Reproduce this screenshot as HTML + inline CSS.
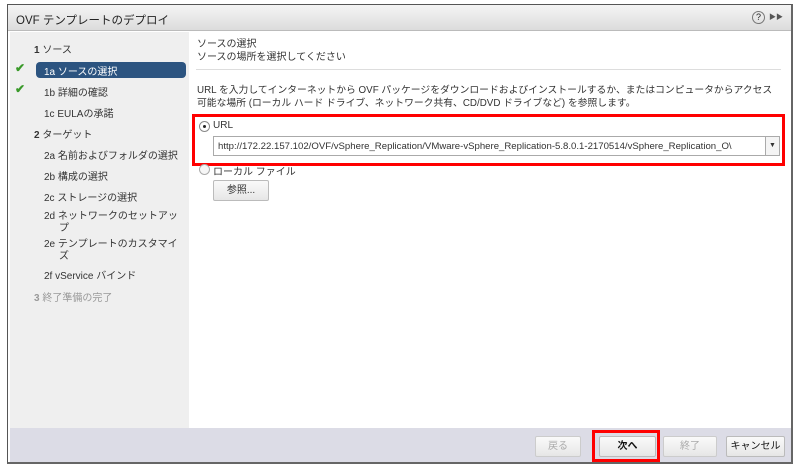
<!DOCTYPE html>
<html><head><meta charset="utf-8"><style>
*{box-sizing:border-box;margin:0;padding:0}
body{width:800px;height:470px;background:#fff;font-family:"Liberation Sans","Noto Sans CJK JP",sans-serif;font-size:11px;color:#333;position:relative;overflow:hidden}
.dlg{position:absolute;left:7px;top:4px;width:786px;height:460px;border:1px solid #555;border-right:2px solid #666;border-bottom:2px solid #666;background:#fff;overflow:hidden}
.title{position:absolute;left:0;top:0;right:0;height:26px;background:linear-gradient(#f4f4f4,#dcdcdc);border-bottom:1px solid #bbb;font-size:11.5px;padding:7px 8px;color:#222}
.left{position:absolute;left:2px;top:27px;width:179px;height:396px;background:#efefef}
.foot{position:absolute;left:2px;right:0;top:423px;bottom:0;background:#dcdce6}
.it{position:absolute;left:0;font-size:10px;color:#333;white-space:nowrap}
.sel{position:absolute;left:26px;top:30px;width:150px;height:16px;background:#2c5480;border-radius:4px}
.chk{position:absolute;left:5px;color:#3a9a2a;font-size:12px;font-weight:bold}
.btn{position:absolute;height:21px;border:1px solid #bbb;border-radius:2px;background:linear-gradient(#fafafa,#e6e6e6);font-size:10px;text-align:center;line-height:19px}
.red{position:absolute;border:3px solid #f00}
</style></head><body>
<div class="dlg">
<div class="title">OVF テンプレートのデプロイ
<span style="position:absolute;right:26px;top:6px;width:13px;height:13px;border:1px solid #777;border-radius:50%;font-size:9px;line-height:11px;text-align:center">?</span>
<span style="position:absolute;right:8px;top:7px;font-size:7px;color:#555">▶▶</span></div>
<div class="left">
<div class="it" style="left:24px;top:9px"><b>1</b> ソース</div>
<div class="sel"></div>
<div class="chk" style="top:29px">✔</div>
<div class="it" style="left:34px;top:31px;color:#fff">1a ソースの選択</div>
<div class="chk" style="top:50px">✔</div>
<div class="it" style="left:34px;top:52px">1b 詳細の確認</div>
<div class="it" style="left:34px;top:73px">1c EULAの承諾</div>
<div class="it" style="left:24px;top:94px"><b>2</b> ターゲット</div>
<div class="it" style="left:34px;top:115px">2a 名前およびフォルダの選択</div>
<div class="it" style="left:34px;top:136px">2b 構成の選択</div>
<div class="it" style="left:34px;top:157px">2c ストレージの選択</div>
<div class="it" style="left:34px;top:179px;line-height:12px">2d ネットワークのセットアッ<br><span style="padding-left:15px">プ</span></div>
<div class="it" style="left:34px;top:207px;line-height:12px">2e テンプレートのカスタマイ<br><span style="padding-left:15px">ズ</span></div>
<div class="it" style="left:34px;top:235px">2f vService バインド</div>
<div class="it" style="left:24px;top:257px;color:#999"><b>3</b> 終了準備の完了</div>
</div>
<div class="it" style="left:189px;top:33px;line-height:13px">ソースの選択<br>ソースの場所を選択してください</div>
<div style="position:absolute;left:188px;right:10px;top:64px;border-top:1px solid #ddd"></div>
<div class="it" style="left:189px;top:79px;line-height:13px;font-size:9.8px">URL を入力してインターネットから OVF パッケージをダウンロードおよびインストールするか、またはコンピュータからアクセス<br>可能な場所 (ローカル ハード ドライブ、ネットワーク共有、CD/DVD ドライブなど) を参照します。</div>
<div style="position:absolute;left:191px;top:116px;width:11px;height:11px;border:1px solid #888;border-radius:50%;background:#fff"><div style="width:3px;height:3px;background:#222;border-radius:50%;margin:3px"></div></div>
<div class="it" style="left:205px;top:115px">URL</div>
<div style="position:absolute;left:205px;top:131px;width:553px;height:20px;border:1px solid #aaa;font-size:9.6px;padding:4px 4px;white-space:nowrap;overflow:hidden">http://172.22.157.102/OVF/vSphere_Replication/VMware-vSphere_Replication-5.8.0.1-2170514/vSphere_Replication_O\</div>
<div style="position:absolute;left:757px;top:131px;width:15px;height:20px;border:1px solid #aaa;background:#f4f4f4;font-size:7px;text-align:center;line-height:18px">▼</div>
<div class="red" style="left:184px;top:109px;width:593px;height:52px"></div>
<div style="position:absolute;left:191px;top:159px;width:11px;height:11px;border:1px solid #aaa;border-radius:50%;background:#f6f6f6"></div>
<div class="it" style="left:205px;top:158px">ローカル ファイル</div>
<div class="btn" style="left:205px;top:175px;width:56px">参照...</div>
<div class="foot"></div>
<div class="btn" style="left:527px;top:431px;width:46px;color:#aaa;border-color:#ccc">戻る</div>
<div class="btn" style="left:591px;top:431px;width:57px;font-weight:bold;color:#111">次へ</div>
<div class="red" style="left:584px;top:425px;width:68px;height:32px"></div>
<div class="btn" style="left:655px;top:431px;width:54px;color:#aaa;border-color:#ccc">終了</div>
<div class="btn" style="left:718px;top:431px;width:59px;color:#111">キャンセル</div>
</div>
</body></html>
